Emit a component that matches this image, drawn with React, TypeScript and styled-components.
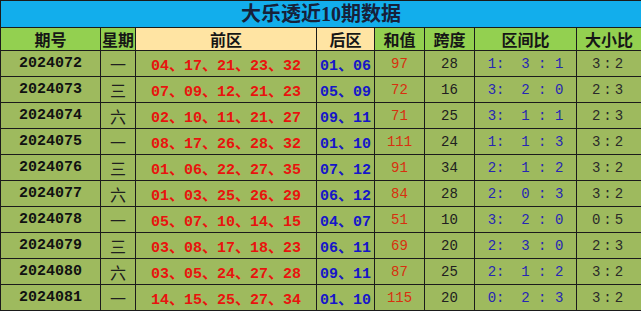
import React from "react";
import styled, { createGlobalStyle } from "styled-components";

const GlobalStyle = createGlobalStyle`
  html, body {
    margin: 0;
    padding: 0;
    background: #ffffff;
  }
`;

const Table = styled.table`
  width: 641px;
  border-collapse: collapse;
  table-layout: fixed;
  font-family: "Liberation Mono", "Noto Sans CJK SC", monospace;
`;

const TitleCell = styled.th`
  height: 26px;
  padding: 0;
  background: #12aeec;
  border: 1px solid #1b1b1b;
  color: #17213a;
  font-family: "Liberation Serif", "Noto Sans CJK SC", serif;
  font-size: 20px;
  font-weight: 700;
  text-align: center;
  line-height: 26px;
`;

const HeadCell = styled.th<{ $warm?: boolean }>`
  height: 22px;
  padding: 0;
  background: ${(p) => (p.$warm ? "#ffe4a3" : "#93d050")};
  border: 1px solid #1b1b1b;
  color: #161616;
  font-family: "Noto Sans CJK SC", sans-serif;
  font-size: 16px;
  font-weight: 700;
  text-align: center;
  line-height: 22px;
`;

type Kind = "issue" | "week" | "front" | "back" | "sum" | "span" | "zone" | "size";

const tones: Record<Kind, { color: string; weight: number; size: number; family: string; spacing: number }> = {
  issue: { color: "#111111", weight: 700, size: 15, family: '"Liberation Mono", monospace', spacing: 0 },
  week: { color: "#202020", weight: 400, size: 16, family: '"Noto Sans CJK SC", sans-serif', spacing: 0 },
  front: { color: "#e8140e", weight: 700, size: 15, family: '"Liberation Mono", "Noto Sans CJK SC", monospace', spacing: 0 },
  back: { color: "#1616c8", weight: 700, size: 15, family: '"Liberation Mono", "Noto Sans CJK SC", monospace', spacing: 0 },
  sum: { color: "#d8300f", weight: 400, size: 14, family: '"Liberation Mono", monospace', spacing: 0 },
  span: { color: "#202020", weight: 400, size: 14, family: '"Liberation Mono", monospace', spacing: 0 },
  zone: { color: "#2626b4", weight: 400, size: 14, family: '"Liberation Mono", monospace', spacing: 0 },
  size: { color: "#2a2a2a", weight: 400, size: 14, family: '"Liberation Mono", monospace', spacing: 3 },
};

const Cell = styled.td<{ $kind: Kind }>`
  height: 25px;
  padding: 0;
  background: #9eba5e;
  border: 1px solid #1b1b1b;
  text-align: center;
  white-space: pre;
  overflow: hidden;
  color: ${(p) => tones[p.$kind].color};
  font-weight: ${(p) => tones[p.$kind].weight};
  font-size: ${(p) => tones[p.$kind].size}px;
  font-family: ${(p) => tones[p.$kind].family};
  letter-spacing: ${(p) => tones[p.$kind].spacing}px;
`;

type Draw = {
  issue: string;
  week: string;
  front: string[];
  back: string[];
  sum: string;
  span: string;
  zone: string;
  size: string;
};

const draws: Draw[] = [
  { issue: "2024072", week: "一", front: ["04", "17", "21", "23", "32"], back: ["01", "06"], sum: "97", span: "28", zone: "1:3:1", size: "3:2" },
  { issue: "2024073", week: "三", front: ["07", "09", "12", "21", "23"], back: ["05", "09"], sum: "72", span: "16", zone: "3:2:0", size: "2:3" },
  { issue: "2024074", week: "六", front: ["02", "10", "11", "21", "27"], back: ["09", "11"], sum: "71", span: "25", zone: "3:1:1", size: "2:3" },
  { issue: "2024075", week: "一", front: ["08", "17", "26", "28", "32"], back: ["01", "10"], sum: "111", span: "24", zone: "1:1:3", size: "3:2" },
  { issue: "2024076", week: "三", front: ["01", "06", "22", "27", "35"], back: ["07", "12"], sum: "91", span: "34", zone: "2:1:2", size: "3:2" },
  { issue: "2024077", week: "六", front: ["01", "03", "25", "26", "29"], back: ["06", "12"], sum: "84", span: "28", zone: "2:0:3", size: "3:2" },
  { issue: "2024078", week: "一", front: ["05", "07", "10", "14", "15"], back: ["04", "07"], sum: "51", span: "10", zone: "3:2:0", size: "0:5" },
  { issue: "2024079", week: "三", front: ["03", "08", "17", "18", "23"], back: ["06", "11"], sum: "69", span: "20", zone: "2:3:0", size: "2:3" },
  { issue: "2024080", week: "六", front: ["03", "05", "24", "27", "28"], back: ["09", "11"], sum: "87", span: "25", zone: "2:1:2", size: "3:2" },
  { issue: "2024081", week: "一", front: ["14", "15", "25", "27", "34"], back: ["01", "10"], sum: "115", span: "20", zone: "0:2:3", size: "3:2" },
];

const widths = [100, 35, 181, 58, 50, 50, 102, 65];

// "1:3:1" -> "1:  3 : 1" like the sheet's spacing
const spreadZone = (z: string) => {
  const [a, b, c] = z.split(":");
  return `${a}:  ${b} : ${c}`;
};

export default function App() {
  return (
    <>
      <GlobalStyle />
      <Table>
        <colgroup>
          {widths.map((w, i) => (
            <col key={i} style={{ width: w }} />
          ))}
        </colgroup>
        <thead>
          <tr>
            <TitleCell colSpan={8}>大乐透近10期数据</TitleCell>
          </tr>
          <tr>
            <HeadCell>期号</HeadCell>
            <HeadCell>星期</HeadCell>
            <HeadCell $warm>前区</HeadCell>
            <HeadCell $warm>后区</HeadCell>
            <HeadCell>和值</HeadCell>
            <HeadCell>跨度</HeadCell>
            <HeadCell>区间比</HeadCell>
            <HeadCell>大小比</HeadCell>
          </tr>
        </thead>
        <tbody>
          {draws.map((d) => (
            <tr key={d.issue}>
              <Cell $kind="issue">{d.issue}</Cell>
              <Cell $kind="week">{d.week}</Cell>
              <Cell $kind="front">{d.front.join("、")}</Cell>
              <Cell $kind="back">{d.back.join("、")}</Cell>
              <Cell $kind="sum">{d.sum}</Cell>
              <Cell $kind="span">{d.span}</Cell>
              <Cell $kind="zone">{spreadZone(d.zone)}</Cell>
              <Cell $kind="size">{d.size}</Cell>
            </tr>
          ))}
        </tbody>
      </Table>
    </>
  );
}
